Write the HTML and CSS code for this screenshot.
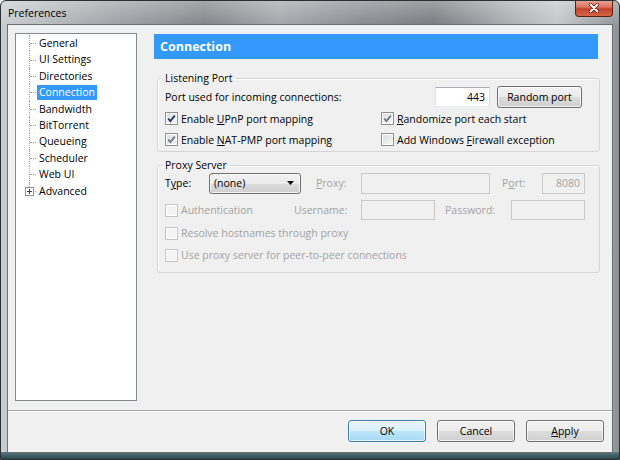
FILE: index.html
```html
<!DOCTYPE html>
<html lang="en">
<head>
    <meta charset="UTF-8">
    <meta name="viewport" content="width=device-width, initial-scale=1.0">
    <title>Preferences</title>
    <link rel="stylesheet" href="styles.css">
</head>
<body>
    <div class="window">
        <div class="titlebar">
            <span class="title">Preferences</span>
            <div class="close-button">
                <svg width="12" height="10" viewBox="0 0 12 10">
                    <path d="M2.5 1.5 L9.5 8.5 M9.5 1.5 L2.5 8.5" stroke="#6b1d12" stroke-width="3.4" stroke-linecap="round"/>
                    <path d="M2.5 1.5 L9.5 8.5 M9.5 1.5 L2.5 8.5" stroke="#ffffff" stroke-width="1.8" stroke-linecap="round"/>
                </svg>
            </div>
        </div>

        <div class="client">
            <div class="main">
                <ul class="tree">
                    <li><span>General</span></li>
                    <li><span>UI Settings</span></li>
                    <li><span>Directories</span></li>
                    <li><span class="selected">Connection</span></li>
                    <li><span>Bandwidth</span></li>
                    <li><span>BitTorrent</span></li>
                    <li><span>Queueing</span></li>
                    <li><span>Scheduler</span></li>
                    <li><span>Web UI</span></li>
                    <li class="has-children">
                        <i class="expander">
                            <svg width="9" height="9" viewBox="0 0 9 9">
                                <rect x="0.5" y="0.5" width="8" height="8" fill="#fff" stroke="#919191"/>
                                <path d="M2 4.5 H7 M4.5 2 V7" stroke="#404040"/>
                            </svg>
                        </i>
                        <span>Advanced</span>
                    </li>
                </ul>

                <div class="page">
                    <div class="page-header">Connection</div>

                    <fieldset class="group listening">
                        <legend>Listening Port</legend>
                        <div class="port-row">
                            <span>Port used for incoming connections:</span>
                            <span class="spacer"></span>
                            <input class="textbox port-box" value="443" readonly>
                            <button class="button random-button">Random port</button>
                        </div>
                        <div class="check-grid">
                            <label class="check">
                                <span class="checkbox checked strong">
                                    <svg width="11" height="11" viewBox="0 0 11 11"><path d="M2.2 5.6 L4.4 8 L8.8 2.6" fill="none" stroke="#22386b" stroke-width="1.8"/></svg>
                                </span>
                                <span>Enable <u>U</u>PnP port mapping</span>
                            </label>
                            <label class="check">
                                <span class="checkbox checked">
                                    <svg width="11" height="11" viewBox="0 0 11 11"><path d="M2.2 5.6 L4.4 8 L8.8 2.6" fill="none" stroke="#6d7787" stroke-width="1.8"/></svg>
                                </span>
                                <span><u>R</u>andomize port each start</span>
                            </label>
                            <label class="check">
                                <span class="checkbox checked">
                                    <svg width="11" height="11" viewBox="0 0 11 11"><path d="M2.2 5.6 L4.4 8 L8.8 2.6" fill="none" stroke="#6d7787" stroke-width="1.8"/></svg>
                                </span>
                                <span>Enable <u>N</u>AT-PMP port mapping</span>
                            </label>
                            <label class="check">
                                <span class="checkbox"></span>
                                <span>Add Windows <u>F</u>irewall exception</span>
                            </label>
                        </div>
                    </fieldset>

                    <fieldset class="group proxy">
                        <legend>Proxy Server</legend>
                        <div class="proxy-row type-row">
                            <span class="type-label">T<u>y</u>pe:</span>
                            <div class="combo">
                                <span>(none)</span>
                                <svg width="7" height="4" viewBox="0 0 7 4"><path d="M0 0 H7 L3.5 4 Z" fill="#000"/></svg>
                            </div>
                            <span class="disabled proxy-label"><u>P</u>roxy:</span>
                            <input class="textbox proxy-box" disabled>
                            <span class="disabled port-label">P<u>o</u>rt:</span>
                            <input class="textbox proxy-port" value="8080" disabled>
                        </div>
                        <div class="proxy-row auth-row">
                            <label class="check disabled auth-check">
                                <span class="checkbox"></span>
                                <span>Authentication</span>
                            </label>
                            <span class="disabled user-label">Username:</span>
                            <input class="textbox small-box" disabled>
                            <span class="disabled pass-label">Password:</span>
                            <input class="textbox small-box" disabled>
                        </div>
                        <label class="check disabled option-row">
                            <span class="checkbox"></span>
                            <span>Resolve hostnames through proxy</span>
                        </label>
                        <label class="check disabled option-row">
                            <span class="checkbox"></span>
                            <span>Use proxy server for peer-to-peer connections</span>
                        </label>
                    </fieldset>
                </div>
            </div>

            <div class="footer">
                <button class="button default">OK</button>
                <button class="button">Cancel</button>
                <button class="button"><u>A</u>pply</button>
            </div>
        </div>
    </div>
</body>
</html>
```

FILE: styles.css
```css
body {
    margin: 0;
    font-family: "Open Sans", "Noto Sans", sans-serif;
    font-size: 10.5px;
    color: #000;
}
u {
    text-decoration-thickness: 1px;
    text-underline-offset: 1px;
}

/* window frame */
.window {
    width: 620px;
    height: 460px;
    box-sizing: border-box;
    display: flex;
    flex-direction: column;
    padding: 0 6px 6px 6px;
    border: 1px solid #2b3033;
    border-radius: 6px 6px 0 0;
    overflow: hidden;
    background:
        linear-gradient(#577983, #2c454c) left bottom / 100% 7px no-repeat,
        linear-gradient(to bottom, rgba(255,255,255,0.3), rgba(255,255,255,0) 26px),
        linear-gradient(to right, #c9ccd0 0%, #b4b7bb 8%, #9a9da2 20%, #7f8287 33%, #a2a5aa 45%, #868990 58%, #75787d 70%, #a9acb0 82%, #c3c6ca 90%, #8f9397 100%);
}
.titlebar {
    height: 23px;
    display: flex;
    align-items: center;
    justify-content: space-between;
    padding-left: 1px;
}
.title {
    margin-top: 1px;
}
.close-button {
    align-self: flex-start;
    margin-top: -1px;
    width: 38px;
    height: 17px;
    box-sizing: border-box;
    display: flex;
    align-items: center;
    justify-content: center;
    border: 1px solid #5a2018;
    border-top: none;
    border-radius: 0 0 4px 4px;
    background: linear-gradient(#eba999 0%, #d9745f 45%, #c2412b 55%, #d4664a 100%);
}
.client {
    flex: 1;
    display: flex;
    flex-direction: column;
    background: #f0f0f0;
    border: 1px solid #6a6f74;
}

/* left tree */
.main {
    flex: 1;
    display: flex;
    gap: 17px;
    padding: 8px 12px 9px 7px;
}
.tree {
    width: 122px;
    box-sizing: border-box;
    margin: 0;
    padding: 1px 0 0 0;
    list-style: none;
    background: #fff;
    border: 1px solid #828790;
}
.tree li {
    position: relative;
    height: 16.4px;
    line-height: 16.4px;
    padding-left: 21px;
}
.tree li span {
    display: inline-block;
    padding: 0 2px;
    line-height: 15px;
}
.tree li::before {
    content: "";
    position: absolute;
    left: 13px;
    top: 0;
    bottom: 0;
    border-left: 1px dotted #a0a0a0;
}
.tree li::after {
    content: "";
    position: absolute;
    left: 14px;
    top: 50%;
    width: 6px;
    border-top: 1px dotted #a0a0a0;
}
.tree li.has-children::before {
    bottom: calc(50% + 4px);
}
.tree .selected {
    background: #3399ff;
    color: #fff;
}
.expander {
    position: absolute;
    left: 9px;
    top: calc(50% - 4px);
    width: 9px;
    height: 9px;
    z-index: 1;
}
.expander svg {
    display: block;
}

/* right page */
.page {
    flex: 1;
    display: flex;
    flex-direction: column;
}
.page-header {
    margin: 1px 2px 0 0;
    height: 25px;
    line-height: 25px;
    padding-left: 6px;
    background: #3399ff;
    color: #fff;
    font-weight: bold;
    font-size: 12.5px;
}
.group {
    margin: 12px 0 0 3px;
    padding: 0 0 1px 7px;
    min-width: 0;
    border: 1px solid #d5d5d5;
    border-radius: 3px;
    box-shadow: inset 1px 1px 0 #fff;
}
.group legend {
    padding: 0 3px;
    margin-left: -3px;
    line-height: 14px;
}
.proxy {
    margin-top: 6px;
    padding-bottom: 7px;
}
.port-row {
    display: flex;
    align-items: center;
    height: 22px;
    margin-top: 1px;
    padding-right: 17px;
}
.spacer {
    flex: 1;
}
.textbox {
    box-sizing: border-box;
    height: 20px;
    margin: 0;
    padding: 0 4px;
    font: inherit;
    color: #000;
    background: #fff;
    border: 1px solid #abadb3;
    border-color: #abadb3 #dbdfe6 #e3e9ef #e2e3ea;
    outline: none;
}
.textbox:disabled {
    background: #f0f0f0;
    border: 1px solid #c9c9c9;
    color: #a3a3a3;
}
.port-box {
    width: 55px;
    text-align: right;
}
.button {
    box-sizing: border-box;
    height: 22px;
    padding: 0;
    font: inherit;
    color: #000;
    border: 1px solid #707070;
    border-radius: 3px;
    background: linear-gradient(#f2f2f2 0%, #ebebeb 50%, #dddddd 50%, #cfcfcf 100%);
    box-shadow: inset 0 0 0 1px rgba(255,255,255,0.7);
}
.button.default {
    border-color: #3c7fb1;
    background: linear-gradient(#eaf6fd 0%, #d9f0fc 50%, #bee6fd 50%, #a7d9f5 100%);
}
.random-button {
    width: 85px;
    margin-left: 7px;
}
.check-grid {
    display: grid;
    grid-template-columns: 216px auto;
    grid-auto-rows: 21px;
}
.check {
    display: flex;
    align-items: center;
    gap: 3px;
}
.checkbox {
    width: 13px;
    height: 13px;
    box-sizing: border-box;
    display: flex;
    align-items: center;
    justify-content: center;
    border: 1px solid #8e8f8f;
    background: linear-gradient(135deg, #dcdcdc, #f8f8f8);
    box-shadow: inset 0 0 0 1px #fff;
}
.disabled {
    color: #a3a3a3;
}
.check.disabled .checkbox {
    border-color: #c4c4c4;
    background: #f4f4f4;
}

/* proxy rows */
.proxy-row {
    display: flex;
    align-items: center;
    height: 22px;
}
.type-label {
    width: 44px;
}
.combo {
    width: 92px;
    height: 21px;
    box-sizing: border-box;
    display: flex;
    align-items: center;
    justify-content: space-between;
    padding: 0 6px 0 4px;
    border: 1px solid #707070;
    border-radius: 3px;
    background: linear-gradient(#f2f2f2 0%, #ebebeb 50%, #dddddd 50%, #cfcfcf 100%);
    box-shadow: inset 0 0 0 1px rgba(255,255,255,0.7);
}
.proxy-label {
    margin-left: 15px;
    width: 45px;
}
.proxy-box {
    width: 129px;
    height: 21px;
}
.port-label {
    margin-left: 12px;
    width: 40px;
}
.proxy-port {
    width: 43px;
    height: 21px;
    text-align: right;
}
.auth-row {
    margin-top: 5px;
}
.auth-check {
    width: 129px;
}
.user-label {
    width: 67px;
}
.small-box {
    width: 74px;
}
.pass-label {
    margin-left: 10px;
    width: 66px;
}
.option-row {
    height: 20px;
    margin-top: 2px;
}

/* bottom buttons */
.footer {
    height: 42px;
    display: flex;
    justify-content: flex-end;
    gap: 11px;
    padding: 9px 8px 0 0;
    box-sizing: border-box;
    border-top: 1px solid #a8a8a8;
    box-shadow: inset 0 1px 0 #fff;
}
.footer .button {
    width: 78px;
}
```
